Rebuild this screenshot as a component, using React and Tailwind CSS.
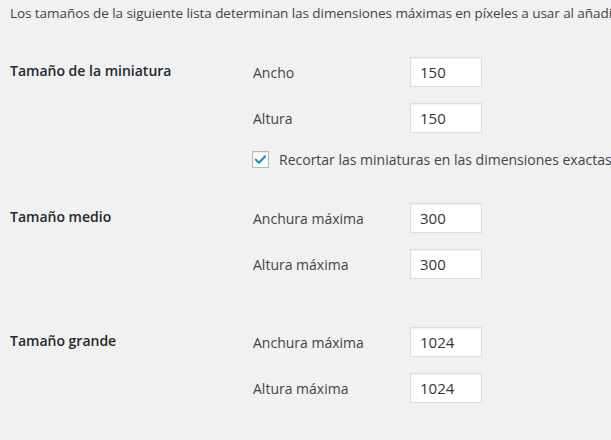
import React from "react";

const sections = [
  {
    title: "Tamaño de la miniatura",
    fields: [
      { label: "Ancho", value: "150" },
      { label: "Altura", value: "150" },
    ],
    crop: true,
  },
  {
    title: "Tamaño medio",
    fields: [
      { label: "Anchura máxima", value: "300" },
      { label: "Altura máxima", value: "300" },
    ],
  },
  {
    title: "Tamaño grande",
    fields: [
      { label: "Anchura máxima", value: "1024" },
      { label: "Altura máxima", value: "1024" },
    ],
  },
];

function Field({ label, value }) {
  return (
    <div className="flex items-center h-[30px]">
      <span className="w-[157px] shrink-0 text-[14px] text-[#444] pt-[1px]">{label}</span>
      <input
        type="text"
        defaultValue={value}
        className="w-[72px] h-[30px] bg-white border border-[#ddd] shadow-[inset_0_1px_2px_rgba(0,0,0,0.07)] px-[9px] text-[15px] text-[#32373c] outline-none"
      />
    </div>
  );
}

export default function App() {
  return (
    <div
      className="w-[611px] h-[440px] overflow-hidden bg-[#f1f1f1] whitespace-nowrap"
      style={{ fontFamily: '"Open Sans", "Noto Sans", sans-serif' }}
    >
      <p className="pl-[10px] pt-[3px] text-[13.5px] text-[#444] tracking-[-0.06px]">
        Los tamaños de la siguiente lista determinan las dimensiones máximas en píxeles a usar al añadir una imagen a la biblioteca de medios.
      </p>

      <div className="pt-[34px]">
        {sections.map((s, i) => (
          <div key={s.title} className={`flex pl-[10px] ${i === 1 ? "mt-[33px]" : i === 2 ? "mt-[48px]" : ""}`}>
            <div className="w-[243px] shrink-0 pt-[3px] text-[14px] font-semibold text-[#23282d]">{s.title}</div>
            <div className="flex flex-col gap-[16px]">
              {s.fields.map(f => (
                <Field key={f.label} {...f} />
              ))}
              {s.crop && (
                <label className="flex items-center gap-[10px] -ml-[1px] text-[14px] text-[#444]">
                  <span className="w-[17px] h-[17px] shrink-0 bg-white border border-[#b4b9be] shadow-[inset_0_1px_2px_rgba(0,0,0,0.1)] flex items-center justify-center">
                    <svg viewBox="0 0 16 16" className="w-[15px] h-[15px]">
                      <path d="M3 8.2 L6.4 11.5 L13 4.5" fill="none" stroke="#1e8cbe" strokeWidth="2.2" strokeLinecap="round" strokeLinejoin="round" />
                    </svg>
                  </span>
                  Recortar las miniaturas en las dimensiones exactas (normalmente las miniaturas son proporcionales)
                </label>
              )}
            </div>
          </div>
        ))}
      </div>
    </div>
  );
}
